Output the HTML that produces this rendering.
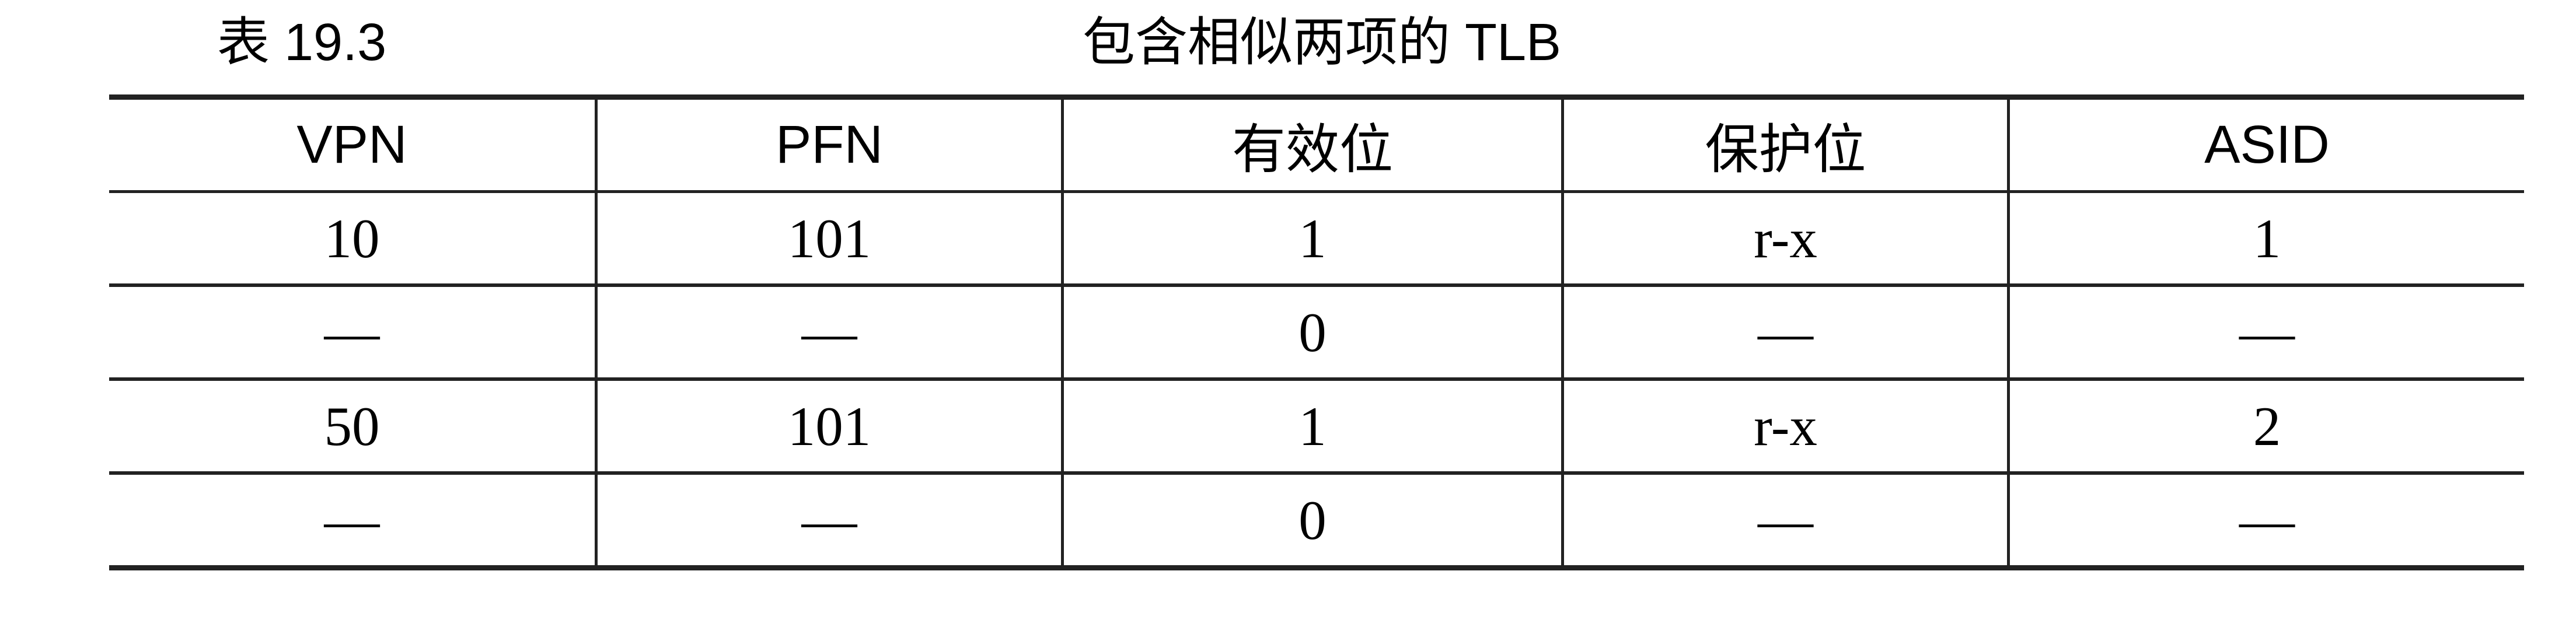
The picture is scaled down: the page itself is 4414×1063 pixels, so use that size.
<!DOCTYPE html>
<html><head><meta charset="utf-8"><style>
html,body{margin:0;padding:0;background:#fff;}
body{width:4414px;height:1063px;position:relative;overflow:hidden;}
.h{position:absolute;background:#222;left:187px;width:4138px;}
.v{position:absolute;background:#222;width:5px;top:170px;height:800px;}
.c{position:absolute;display:flex;align-items:center;justify-content:center;color:#000;white-space:nowrap;}
.hd{font-family:"Liberation Sans","Noto Sans CJK SC",sans-serif;font-size:92px;}
.bd{font-family:"Liberation Serif",serif;font-size:95px;}
.t{position:absolute;font-family:"Liberation Sans","Noto Sans CJK SC",sans-serif;font-size:90px;line-height:1;top:28px;white-space:nowrap;}
</style></head><body>
<div class="t" style="left:372px;">表 19.3</div>
<div class="t" style="left:1855px;">包含相似两项的 TLB</div>

<div class="h" style="top:162px;height:9px;"></div>
<div class="h" style="top:326px;height:5px;"></div>
<div class="h" style="top:486px;height:6px;"></div>
<div class="h" style="top:647px;height:6px;"></div>
<div class="h" style="top:808px;height:6px;"></div>
<div class="h" style="top:969px;height:9px;"></div>

<div class="v" style="left:1019px;"></div>
<div class="v" style="left:1818px;"></div>
<div class="v" style="left:2675px;"></div>
<div class="v" style="left:3439px;"></div>

<!-- header -->
<div class="c hd" style="left:187px;width:832px;top:171px;height:155px;">VPN</div>
<div class="c hd" style="left:1024px;width:794px;top:171px;height:155px;">PFN</div>
<div class="c hd" style="left:1823px;width:852px;top:171px;height:155px;">有效位</div>
<div class="c hd" style="left:2680px;width:759px;top:171px;height:155px;">保护位</div>
<div class="c hd" style="left:3444px;width:881px;top:171px;height:155px;">ASID</div>

<!-- row 1 -->
<div class="c bd" style="left:187px;width:832px;top:331px;height:155px;">10</div>
<div class="c bd" style="left:1024px;width:794px;top:331px;height:155px;">101</div>
<div class="c bd" style="left:1823px;width:852px;top:331px;height:155px;">1</div>
<div class="c bd" style="left:2680px;width:759px;top:331px;height:155px;">r-x</div>
<div class="c bd" style="left:3444px;width:881px;top:331px;height:155px;">1</div>
<!-- row 2 -->
<div class="c bd" style="left:187px;width:832px;top:492px;height:155px;">—</div>
<div class="c bd" style="left:1024px;width:794px;top:492px;height:155px;">—</div>
<div class="c bd" style="left:1823px;width:852px;top:492px;height:155px;">0</div>
<div class="c bd" style="left:2680px;width:759px;top:492px;height:155px;">—</div>
<div class="c bd" style="left:3444px;width:881px;top:492px;height:155px;">—</div>
<!-- row 3 -->
<div class="c bd" style="left:187px;width:832px;top:653px;height:155px;">50</div>
<div class="c bd" style="left:1024px;width:794px;top:653px;height:155px;">101</div>
<div class="c bd" style="left:1823px;width:852px;top:653px;height:155px;">1</div>
<div class="c bd" style="left:2680px;width:759px;top:653px;height:155px;">r-x</div>
<div class="c bd" style="left:3444px;width:881px;top:653px;height:155px;">2</div>
<!-- row 4 -->
<div class="c bd" style="left:187px;width:832px;top:814px;height:155px;">—</div>
<div class="c bd" style="left:1024px;width:794px;top:814px;height:155px;">—</div>
<div class="c bd" style="left:1823px;width:852px;top:814px;height:155px;">0</div>
<div class="c bd" style="left:2680px;width:759px;top:814px;height:155px;">—</div>
<div class="c bd" style="left:3444px;width:881px;top:814px;height:155px;">—</div>
</body></html>
